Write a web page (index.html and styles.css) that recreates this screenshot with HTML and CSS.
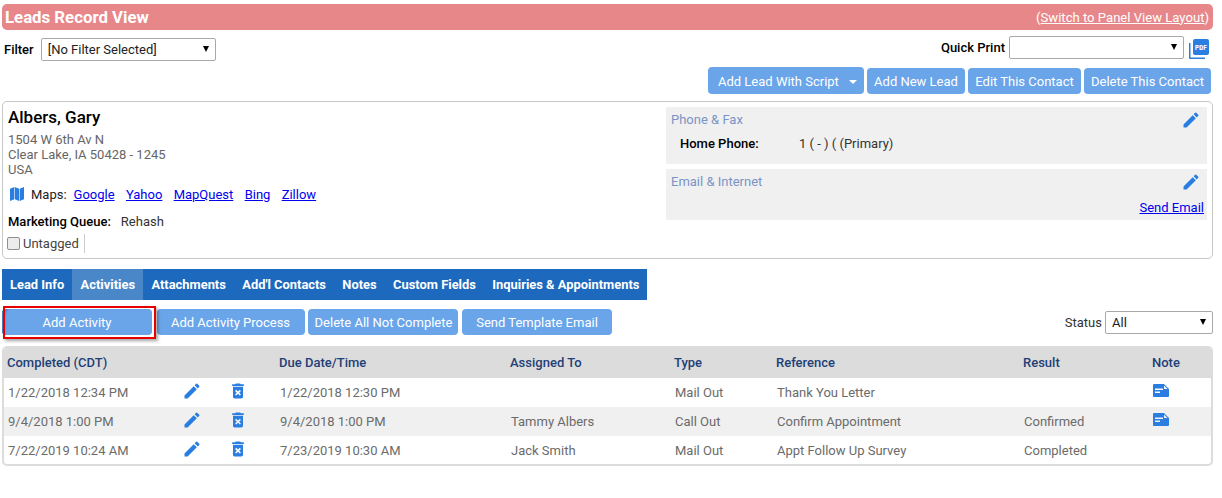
FILE: index.html
```html
<!DOCTYPE html>
<html lang="en">
<head>
<meta charset="utf-8">
<title>Leads Record View</title>
<link rel="stylesheet" href="styles.css">
</head>
<body>
<svg class="defs" width="0" height="0" aria-hidden="true">
  <symbol id="i-edit" viewBox="0 0 24 24"><path d="M3 17.25V21h3.75L17.81 9.94l-3.75-3.75L3 17.25zM20.71 7.04a1 1 0 0 0 0-1.41l-2.34-2.34a1 1 0 0 0-1.41 0l-1.83 1.83 3.75 3.75 1.83-1.83z"/></symbol>
  <symbol id="i-trash" viewBox="0 0 24 24"><path d="M6 19c0 1.1.9 2 2 2h8c1.1 0 2-.9 2-2V7H6v12zm2.46-7.12l1.41-1.41L12 12.59l2.12-2.12 1.41 1.41L13.41 14l2.12 2.12-1.41 1.41L12 15.41l-2.12 2.12-1.41-1.41L10.59 14l-2.13-2.12zM15.5 4l-1-1h-5l-1 1H5v2h14V4z"/></symbol>
  <symbol id="i-note" viewBox="0 0 16 13"><path fill-rule="evenodd" d="M1 0h10l5 5v7a1 1 0 0 1-1 1H1a1 1 0 0 1-1-1V1a1 1 0 0 1 1-1zM2 4.500V6h8V4.500zM2 7.500V9h5V7.500zM11 1.500V5h3.500z"/></symbol>
</svg>

<header class="title-bar">
  <h1 class="title">Leads Record View</h1>
  <span class="switch">(<a href="#">Switch to Panel View Layout</a>)</span>
</header>

<div class="filter-row">
  <div class="filter-left">
    <label class="field-label">Filter</label>
    <span class="select-wrap filter-select"><select><option>[No Filter Selected]</option></select></span>
  </div>
  <div class="filter-right">
    <label class="field-label">Quick Print</label>
    <span class="select-wrap print-select"><select><option></option></select></span>
    <svg class="pdf" viewBox="0 0 20 22" width="20" height="22" aria-label="PDF">
      <path class="pdf-back" d="M0 6h1.500v14.500h14.500V22H1a1 1 0 0 1-1-1z"/>
      <rect class="pdf-front" x="4" y="2" width="16" height="16" rx="2"/>
      <text class="pdf-text" x="12" y="12.500">PDF</text>
    </svg>
  </div>
</div>

<div class="top-actions">
  <button class="btn btn-script">Add Lead With Script<span class="caret"></span></button>
  <button class="btn btn-new">Add New Lead</button>
  <button class="btn btn-edit">Edit This Contact</button>
  <button class="btn btn-del">Delete This Contact</button>
</div>

<section class="card">
  <div class="card-left">
    <h2 class="name">Albers, Gary</h2>
    <address class="address">1504 W 6th Av N<br>Clear Lake, IA 50428 - 1245<br>USA</address>
    <div class="maps">
      <svg class="map-icon" viewBox="0 0 16 16" width="16" height="16" aria-hidden="true">
        <path d="M1 2.700l4.300-1.700v12.300L1 15zM5.900 1l4.200 1.700V15l-4.200-1.700zM10.700 2.700L15 1v12.300L10.700 15z"/>
      </svg>
      <span class="maps-label">Maps:</span>
      <a href="#">Google</a><a href="#">Yahoo</a><a href="#">MapQuest</a><a href="#">Bing</a><a href="#">Zillow</a>
    </div>
    <div class="queue"><strong>Marketing Queue:</strong><span>Rehash</span></div>
    <div class="tags"><input class="tag-box" type="checkbox"><span class="tag-text">Untagged</span></div>
  </div>
  <div class="card-right">
    <div class="panel panel-phone">
      <h3 class="panel-title">Phone &amp; Fax</h3>
      <svg class="panel-edit"><use href="#i-edit"/></svg>
      <div class="phone-line"><strong>Home Phone:</strong><span>1 ( - ) ( (Primary)</span></div>
    </div>
    <div class="panel panel-email">
      <h3 class="panel-title">Email &amp; Internet</h3>
      <svg class="panel-edit"><use href="#i-edit"/></svg>
      <a class="send" href="#">Send Email</a>
    </div>
  </div>
</section>

<nav class="tabs">
  <a href="#">Lead Info</a>
  <a href="#" class="active">Activities</a>
  <a href="#">Attachments</a>
  <a href="#">Add'l Contacts</a>
  <a href="#">Notes</a>
  <a href="#">Custom Fields</a>
  <a href="#">Inquiries &amp; Appointments</a>
</nav>

<div class="activity-actions">
  <button class="btn btn-add">Add Activity</button>
  <button class="btn btn-process">Add Activity Process</button>
  <button class="btn btn-delall">Delete All Not Complete</button>
  <button class="btn btn-send">Send Template Email</button>
  <div class="status">
    <label class="status-label">Status</label>
    <span class="select-wrap status-select"><select><option>All</option></select></span>
  </div>
  <span class="highlight"></span>
</div>

<div class="table-wrap">
  <table class="grid">
    <colgroup>
      <col class="c1"><col class="c2"><col class="c3"><col class="c4"><col class="c5"><col class="c6"><col class="c7"><col class="c8"><col class="c9">
    </colgroup>
    <thead>
      <tr><th>Completed (CDT)</th><th></th><th></th><th>Due Date/Time</th><th>Assigned To</th><th>Type</th><th>Reference</th><th>Result</th><th>Note</th></tr>
    </thead>
    <tbody>
      <tr>
        <td>1/22/2018 12:34 PM</td>
        <td><svg class="row-icon"><use href="#i-edit"/></svg></td>
        <td><svg class="row-icon trash"><use href="#i-trash"/></svg></td>
        <td>1/22/2018 12:30 PM</td><td></td><td>Mail Out</td><td>Thank You Letter</td><td></td>
        <td><svg class="note-icon"><use href="#i-note"/></svg></td>
      </tr>
      <tr>
        <td>9/4/2018 1:00 PM</td>
        <td><svg class="row-icon"><use href="#i-edit"/></svg></td>
        <td><svg class="row-icon trash"><use href="#i-trash"/></svg></td>
        <td>9/4/2018 1:00 PM</td><td>Tammy Albers</td><td>Call Out</td><td>Confirm Appointment</td><td>Confirmed</td>
        <td><svg class="note-icon"><use href="#i-note"/></svg></td>
      </tr>
      <tr>
        <td>7/22/2019 10:24 AM</td>
        <td><svg class="row-icon"><use href="#i-edit"/></svg></td>
        <td><svg class="row-icon trash"><use href="#i-trash"/></svg></td>
        <td>7/23/2019 10:30 AM</td><td>Jack Smith</td><td>Mail Out</td><td>Appt Follow Up Survey</td><td>Completed</td>
        <td></td>
      </tr>
    </tbody>
  </table>
</div>
</body>
</html>
```

FILE: styles.css
```css
* { box-sizing: border-box; }
html, body { background: #fff; }
body {
  margin: 0;
  padding: 4px 9px 0 2px;
  font-family: Roboto, "Liberation Sans", Arial, sans-serif;
  font-size: 13px;
  line-height: 15px;
  color: #000;
}
.defs { position: absolute; }
a { color: #0000ee; }

.title-bar {
  height: 26px;
  background: #e8878a;
  border-radius: 5px;
  display: flex;
  align-items: center;
  justify-content: space-between;
  padding: 0 4px 0 3px;
  color: #fff;
}
.title { margin: 0; font-size: 16.800px; font-weight: 700; line-height: 26px; }
.switch { font-size: 13.100px; }
.switch a { color: #fff; }

.filter-row {
  display: flex;
  justify-content: space-between;
  align-items: flex-start;
  padding: 7px 4px 0 2px;
  height: 38px;
}
.filter-left { display: flex; align-items: center; gap: 7px; padding-top: 1px; }
.filter-right { display: flex; align-items: center; gap: 4px; margin-top: -1px; }
.field-label { font-weight: 500; }
.select-wrap { position: relative; display: block; height: 23px; }
.select-wrap select {
  appearance: none;
  width: 100%;
  height: 100%;
  border: 1px solid #a9a9a9;
  border-radius: 2px;
  background: #fff;
  padding: 0 0 0 6px;
  font: inherit;
  color: #222;
}
.select-wrap::after {
  content: "";
  position: absolute;
  right: 7px;
  top: 8px;
  border-left: 3.500px solid transparent;
  border-right: 3.500px solid transparent;
  border-top: 6px solid #000;
}
.filter-select { width: 175px; }
.print-select { width: 175px; }
.status-select { width: 108px; }
.pdf { margin-left: 1px; }
.pdf-back { fill: #2a7de1; }
.pdf-front { fill: #2a7de1; }
.pdf-text { fill: #fff; font-family: "DejaVu Sans Mono", monospace; font-size: 7px; font-weight: 700; text-anchor: middle; }

.top-actions { display: flex; justify-content: flex-end; gap: 3px; padding-right: 2px; height: 33px; }
.btn {
  border: 0;
  border-radius: 4px;
  background: #6aa5ea;
  color: #fff;
  font: inherit;
  height: 26px;
  padding: 0;
}
.btn-script { width: 156px; padding: 2px 0 0 10px; text-align: left; height: 27px; margin-top: -1px; }
.btn-new { width: 98px; }
.btn-edit { width: 113px; }
.btn-del { width: 127px; }
.caret {
  display: inline-block;
  margin-left: 10px;
  vertical-align: 2px;
  border-left: 4px solid transparent;
  border-right: 4px solid transparent;
  border-top: 4px solid #fff;
}

.card {
  height: 158px;
  border: 1px solid #c8c8c8;
  border-radius: 5px;
  display: flex;
  padding: 5px 5px 0 5px;
}
.card-left { width: 658px; flex: none; }
.card-right { flex: 1; display: flex; flex-direction: column; gap: 5px; }
.name { margin: 0; font-size: 17px; font-weight: 500; line-height: 20px; }
.address { font-style: normal; color: #666; padding-top: 5px; }
.maps { display: flex; align-items: center; margin-top: 8px; height: 18px; color: #222; }
.map-icon { fill: #2a7de1; margin: 0 6px 0 1px; flex: none; }
.maps-label { margin-right: 7px; }
.maps a { margin-right: 11.300px; }
.queue { margin-top: 11px; display: flex; gap: 10px; color: #333; }
.queue strong { font-weight: 500; color: #000; }
.tags { display: flex; align-items: center; margin-top: 5px; height: 19px; }
.tag-box {
  appearance: none;
  margin: 0 3px 0 -1px;
  width: 13px;
  height: 13px;
  background: #ececec;
  border: 1px solid #8f8f8f;
  border-radius: 2px;
}
.tag-text { color: #444; padding-right: 5px; border-right: 1px solid #ccc; line-height: 19px; }

.panel { position: relative; background: #f0f0f0; padding: 5px 5px 0; }
.panel-phone { height: 57px; }
.panel-email { height: 51px; }
.panel-title { margin: 0; font-size: 13px; font-weight: 400; color: #7a94c6; line-height: 15px; }
.panel-edit { position: absolute; right: 6px; top: 3px; width: 20px; height: 20px; fill: #2a7de1; }
.phone-line { display: flex; padding: 9px 0 0 9px; color: #333; }
.phone-line strong { width: 119px; font-weight: 500; color: #000; }
.send { position: absolute; right: 3px; top: 31px; }

.tabs {
  display: flex;
  width: 645px;
  height: 31px;
  margin-top: 10px;
  background: #1c69be;
}
.tabs a {
  color: #fff;
  font-weight: 700;
  text-decoration: none;
  line-height: 31px;
  padding: 0 8.200px;
  font-size: 12.900px;
  white-space: nowrap;
}
.tabs a:first-child { padding-left: 8px; }
.tabs a.active { background: #4a87c9; }

.activity-actions {
  position: relative;
  display: flex;
  align-items: center;
  height: 26px;
  margin-top: 9px;
}
.btn-add { width: 150px; box-shadow: inset 6px 2px 2px -3px #4a7cb8; }
.btn-process { width: 148px; margin-left: 5px; padding-right: 1px; }
.btn-delall { width: 150px; margin-left: 3px; padding-left: 1px; }
.btn-send { width: 150px; margin-left: 4px; }
.status { margin-left: auto; display: flex; align-items: center; gap: 3px; color: #333; }
.highlight {
  position: absolute;
  left: 1px;
  top: -3px;
  width: 153px;
  height: 33px;
  border: 2px solid #e60000;
  box-shadow: 2px 2px 3px rgba(0,0,0,.35);
  pointer-events: none;
}

.table-wrap {
  margin-top: 11px;
  border: 2px solid #dcdcdc;
  border-top: 0;
  border-radius: 5px;
  overflow: hidden;
  height: 120px;
}
.grid { border-collapse: collapse; table-layout: fixed; width: 100%; }
.c1 { width: 175px; }
.c2 { width: 48px; }
.c3 { width: 49px; }
.c4 { width: 231px; }
.c5 { width: 164px; }
.c6 { width: 102px; }
.c7 { width: 247px; }
.c8 { width: 129px; }
.grid th {
  height: 32px;
  background: #dcdcdc;
  color: #1f3f77;
  font-weight: 500;
  text-align: left;
  padding: 0 0 0 3px;
}
.grid td {
  height: 29px;
  padding: 0 0 0 4px;
  color: #6b6b6b;
  vertical-align: middle;
}
.grid tbody tr:nth-child(2) td { background: #f0f0f0; }
.row-icon { display: block; width: 20px; height: 20px; fill: #2a7de1; margin: -3px 0 0 -1px; }
.row-icon.trash { margin-left: -3px; }
.note-icon { display: block; width: 16px; height: 13px; fill: #2a7de1; margin: -4px 0 0 0; }
```
